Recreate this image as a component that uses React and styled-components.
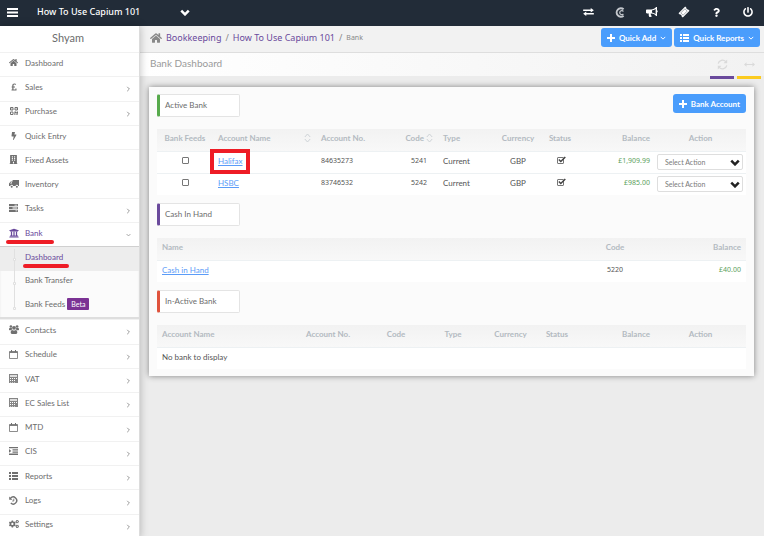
import React from 'react';
import styled, { createGlobalStyle, css } from 'styled-components';
import {
  FaHome,
  FaPoundSign,
  FaBolt,
  FaBuilding,
  FaUniversity,
  FaCogs,
  FaQuestion,
  FaPowerOff,
} from 'react-icons/fa';

const palette = {
  navy: '#222c38',
  purple: '#6a4a9c',
  blue: '#4a9dfc',
  link: '#5b9cf8',
  green: '#5c9f5c',
  red: '#ee1c25',
  text: '#6c6c6c',
  muted: '#b3bac1',
};

const wideFont = "'Noto Sans', 'Open Sans', sans-serif";

const GlobalStyle = createGlobalStyle`
  * {
    box-sizing: border-box;
  }
  body {
    margin: 0;
    background: #ececec;
    color: ${palette.text};
    font-family: Lato, 'Open Sans', sans-serif;
    font-size: 8px;
    line-height: 10px;
    overflow-x: hidden;
  }
  button, select, input {
    font-family: inherit;
    margin: 0;
  }
  a {
    color: inherit;
    text-decoration: none;
  }
  svg {
    display: block;
    flex: none;
  }
`;

const Page = styled.div`
  height: 100vh;
  display: flex;
  flex-direction: column;
  overflow: hidden;
`;

/* top bar */

const TopBar = styled.header`
  height: 26px;
  flex: none;
  display: flex;
  align-items: center;
  justify-content: space-between;
  padding: 0 10px 2px 7px;
  background: ${palette.navy};
  color: #fff;
`;

const TopGroup = styled.div`
  display: flex;
  align-items: center;
  gap: 19px;
`;

const IconButton = styled.button`
  display: flex;
  align-items: center;
  justify-content: center;
  padding: 0;
  border: 0;
  background: none;
  color: inherit;
  cursor: pointer;
`;

const CompanyButton = styled(IconButton)`
  width: 153px;
  justify-content: space-between;
  font-family: ${wideFont};
  font-size: 9px;
  font-weight: 500;
  line-height: 12px;
`;

const TopIcons = styled.nav`
  display: grid;
  grid-template-columns: repeat(6, 12px);
  gap: 20px;
`;

/* sidebar */

const Body = styled.div`
  flex: 1;
  min-height: 0;
  display: flex;
`;

const SideBar = styled.aside`
  width: 140px;
  flex: none;
  height: calc(100% + 2px);
  display: flex;
  flex-direction: column;
  background: #fff;
  border-right: 1px solid #dcdcdc;
  box-shadow: 0 0 8px rgba(0, 0, 0, 0.25);
  z-index: 1;
`;

const UserName = styled.div`
  height: 26px;
  flex: none;
  padding-top: 5px;
  text-align: center;
  font-size: 11px;
  line-height: 14px;
  padding-right: 3px;
`;

const Menu = styled.ul`
  flex: 1;
  display: grid;
  grid-auto-rows: 1fr;
  margin: 0;
  padding: 0;
  list-style: none;
`;

const MenuItem = styled.li`
  display: flex;
  border-top: 1px solid #f1f1f1;
  ${(props) =>
    props.$active &&
    css`
      color: ${palette.purple};
    `}
`;

const MenuLink = styled.a`
  flex: 1;
  display: flex;
  align-items: center;
  padding: 0 8px 4px 8px;
`;

const MenuIcon = styled.span`
  width: 11px;
  display: flex;
  justify-content: center;
  margin-right: 6px;
  color: ${(props) => (props.$active ? palette.purple : '#707070')};
`;

const MenuLabel = styled.span`
  flex: 1;
`;

const Arrow = styled.span`
  padding-top: 5px;
  color: #999;
`;

const SubMenuWrap = styled.li`
  grid-row: span 3;
  position: relative;
  display: flex;
  background: #fbfbfb;
  border-top: 1px solid #d0d0d0;
  border-bottom: 2px solid #dedede;
  box-shadow: inset 0 2px 2px #e4e4e4;
`;

const SubMenu = styled.ul`
  flex: 1;
  display: grid;
  grid-auto-rows: 1fr;
  margin: 0;
  padding: 0;
  list-style: none;
`;

const SubItem = styled.li`
  display: flex;
  align-items: center;
  padding-left: 25px;
  padding-bottom: 4px;
  gap: 2px;
  ${(props) =>
    props.$active &&
    css`
      background: #ededed;
      color: ${palette.purple};
    `}
`;

const Tree = styled.svg`
  position: absolute;
  left: 12px;
  top: 0;
`;

const Beta = styled.span`
  padding: 1px 4px;
  border-radius: 1px;
  background: #7b3294;
  color: #fff;
  font-size: 7px;
`;

const Marked = styled.span`
  position: relative;
`;

const Stroke = styled.span`
  position: absolute;
  left: ${(props) => props.$left}px;
  top: 12px;
  width: ${(props) => props.$width}px;
  height: 4px;
  border-radius: 2px;
  background: ${palette.red};
`;

/* main column */

const Main = styled.main`
  flex: 1;
  min-width: 0;
`;

const CrumbBar = styled.div`
  height: 27px;
  display: flex;
  align-items: center;
  justify-content: space-between;
  padding: 0 4px 3px 10px;
  background: #f2f2f2;
  border-bottom: 1px solid #dedede;
`;

const Crumbs = styled.nav`
  display: flex;
  align-items: center;
  gap: 4px;
  color: #888;
  font-family: ${wideFont};
  font-size: 9px;
  a {
    color: ${palette.purple};
  }
  small {
    font-size: 7px;
  }
`;

const Buttons = styled.div`
  display: flex;
  gap: 2px;
`;

const BlueButton = styled.button`
  height: 19px;
  display: flex;
  align-items: center;
  gap: 4px;
  padding: 0 6px;
  border: 0;
  border-radius: 3px;
  background: ${palette.blue};
  color: #fff;
  font-size: 8px;
  font-weight: 700;
  line-height: 10px;
  white-space: nowrap;
  cursor: pointer;
`;

const TitleBar = styled.div`
  height: 23px;
  display: flex;
  justify-content: space-between;
  padding-left: 10px;
  background: linear-gradient(to right, #fff, #f2f2f2);
`;

const Title = styled.h1`
  margin: 0;
  padding-top: 3px;
  color: #9a9a9a;
  font-size: 10px;
  font-weight: 400;
  line-height: 14px;
`;

const Tools = styled.div`
  display: flex;
  gap: 3px;
  padding-right: 3px;
`;

const Tool = styled(IconButton)`
  width: 24px;
  height: 26px;
  padding-bottom: 0;
  border-bottom: 3px solid ${(props) => props.$color};
  color: #dadada;
`;

const Panel = styled.div`
  margin: 11px 10px 0 9px;
  padding: 7px 8px;
  background: #fbfbfb;
  box-shadow: 0 0 6px rgba(0, 0, 0, 0.45);
`;

const SectionHead = styled.div`
  display: flex;
  align-items: flex-start;
  justify-content: space-between;
  height: 35px;
`;

const SectionLabel = styled.h2`
  width: 83px;
  height: 23px;
  margin: 0;
  padding: 5px 0 0 5px;
  border: 1px solid #e4e4e4;
  border-left: 3px solid ${(props) => props.$color};
  border-radius: 2px;
  background: #fff;
  font-size: 8px;
  font-weight: 400;
  line-height: 10px;
`;

const Table = styled.table`
  width: 100%;
  table-layout: fixed;
  border-collapse: collapse;
  margin-bottom: ${(props) => (props.$last ? 0 : 8)}px;
`;

const Th = styled.th`
  height: 22px;
  padding: 0 5px 3px;
  background: linear-gradient(#f2f2f2, #f8f8f8);
  color: ${palette.muted};
  font-weight: 700;
  text-align: ${(props) => props.$align || 'left'};
  white-space: nowrap;
`;

const Td = styled.td`
  height: 22px;
  padding: 0 5px 3px;
  border-top: 1px solid #edf1f3;
  background: #fff;
  color: ${(props) => (props.$money ? palette.green : '#555')};
  text-align: ${(props) => props.$align || 'left'};
  white-space: nowrap;
`;

const NumberTd = styled(Td)`
  font-family: ${wideFont};
  font-size: 7px;
`;

const SortHead = styled.span`
  display: flex;
  align-items: center;
  justify-content: ${(props) => (props.$tight ? 'flex-end' : 'space-between')};
  gap: 2px;
`;

const AccountLink = styled.a`
  position: relative;
  color: ${palette.link};
  text-decoration: underline;
`;

const Highlight = styled.span`
  position: absolute;
  top: -7px;
  left: -8px;
  width: 40px;
  height: 25px;
  border: 4px solid ${palette.red};
`;

const CheckWrap = styled.label`
  position: relative;
  display: inline-block;
  width: 7px;
  height: 7px;
  svg {
    position: absolute;
    left: 0;
    top: -1px;
  }
`;

const CheckInput = styled.input`
  appearance: none;
  display: block;
  width: 7px;
  height: 7px;
  border: 1px solid #777;
  border-radius: 1px;
  background: #fff;
`;

const ActionTd = styled(Td)`
  padding: 0 3px 0 2px;
`;

const SelectWrap = styled.span`
  position: relative;
  display: block;
  svg {
    position: absolute;
    right: 3px;
    top: 5px;
    color: #222;
    pointer-events: none;
  }
`;

const ActionSelect = styled.select`
  appearance: none;
  display: block;
  width: 100%;
  height: 16px;
  padding: 0 7px;
  border: 1px solid #dedede;
  border-radius: 2px;
  background: #fff;
  color: #7a7a7a;
  font-size: 7px;
`;

const Chevron = ({ width = 8, height = 5, stroke = 2 }) => (
  <svg width={width} height={height} viewBox="0 0 8 5">
    <path d="M1 1l3 3 3-3" fill="none" stroke="currentColor" strokeWidth={stroke} />
  </svg>
);

const SideArrow = ({ open }) =>
  open ? (
    <Chevron width={5} height={4} stroke={1.4} />
  ) : (
    <svg width="5" height="6" viewBox="0 0 5 6">
      <path d="M1.200.8l2.200 2.200-2.200 2.200" fill="none" stroke="currentColor" />
    </svg>
  );

const SortIcon = () => (
  <svg width="7" height="10" viewBox="0 0 7 10">
    <path d="M.8 4l2.700-3 2.700 3M.8 6l2.700 3 2.700-3" fill="none" stroke="#cdd2d6" />
  </svg>
);

const MenuBars = () => (
  <svg width="11" height="9" viewBox="0 0 11 9" fill="currentColor">
    <path d="M0 0h11v2H0zM0 3.500h11v2H0zM0 7h11v2H0z" />
  </svg>
);

const Exchange = () => (
  <svg width="11" height="8" viewBox="0 0 12 9" fill="currentColor">
    <path d="M0 1.600h8.500V0L12 2.500 8.500 5V3.400H0zM12 5.600H3.500V4L0 6.500 3.500 9V7.400H12z" />
  </svg>
);

const CapiumMark = () => (
  <svg width="10" height="11" viewBox="0 0 10 11" fill="none" stroke="#c3c7cc">
    <path d="M8.600 2.300A4.200 4.200 0 1 0 8.600 8.700" strokeWidth="2" />
    <path d="M8.400 4.500A2 2 0 1 0 8.400 6.800" strokeWidth="1.200" />
  </svg>
);

const Megaphone = () => (
  <svg width="12" height="11" viewBox="0 0 12 11" fill="currentColor">
    <path d="M1 2.500h5v4H4.700c-.1 1 .3 1.900 1.200 2.800-.7.900-2.100.900-2.700.5-.5-1.100-.7-2.200-.4-3.300H1c-.6 0-1-.4-1-.9V3.500c0-.6.4-1 1-1z" />
    <path d="M5.800 3C7.500 2.800 9 2.100 10.300.9v7.200C9 7 7.500 6.200 5.800 6" fill="none" stroke="currentColor" strokeWidth="1.100" />
    <path d="M9.800 0h1.200v3.300c1 .3 1 1.900 0 2.200V9H9.800z" />
  </svg>
);

const Ticket = () => (
  <svg width="12" height="12" viewBox="0 0 12 12">
    <path
      d="M7.200.5l1.200 1.200c-.3.800.900 2 1.700 1.700l1.400 1.400-6.700 6.700-1.300-1.300c.4-.900-.8-2.100-1.700-1.700L.5 7.200z"
      fill="currentColor"
    />
    <path d="M6.900 2.800l2.300 2.300-4.100 4.100-2.300-2.300z" fill="none" stroke="#222c38" strokeWidth=".4" />
  </svg>
);

const Plus = () => (
  <svg width="8" height="8" viewBox="0 0 8 8" fill="currentColor">
    <path d="M3 0h2v3h3v2H5v3H3V5H0V3h3z" />
  </svg>
);

const ListIcon = () => (
  <svg width="9" height="8" viewBox="0 0 9 8" fill="currentColor">
    <path d="M0 0h2v2H0zM3 0h6v2H3zM0 3h2v2H0zM3 3h6v2H3zM0 6h2v2H0zM3 6h6v2H3z" />
  </svg>
);

const QrIcon = () => (
  <svg width="8" height="8" viewBox="0 0 8 8">
    <path d="M.5.5h2.500V3H.5zM5 .5h2.500V3H5zM.5 5h2.500v2.500H.5z" fill="none" stroke="currentColor" />
    <path d="M1.400 1.400h.8v.8h-.8zM5.900 1.400h.8v.8h-.8zM4.400 4.500h1.600v.8h.8v-.8H8v2.300H6.300v-.8H5.400V8h-1zM6 7.200h.8V8H6zM7.200 7.200H8V8h-.8z" fill="currentColor" />
  </svg>
);

const UsersIcon = () => (
  <svg width="10" height="9" viewBox="0 0 10 9" fill="currentColor">
    <circle cx="1.900" cy="1.500" r="1.300" />
    <circle cx="8.100" cy="1.500" r="1.300" />
    <circle cx="5" cy="2.800" r="1.900" />
    <path d="M0 4.700C0 3.400.4 2.700 1 2.700c.6.4 1.200.4 1.800.2.100.7.300 1.200.7 1.600-.8 0-1.300.2-1.700.7H.6c-.4 0-.6-.2-.6-.5zM10 4.700c0-1.300-.4-2-1-2-.6.4-1.200.4-1.800.2-.1.700-.3 1.200-.7 1.600.8 0 1.300.2 1.700.7h1.200c.4 0 .6-.2.6-.5zM1.700 7.600c0-1.700.6-2.700 1.500-2.700 1.200.8 2.400.8 3.600 0 .9 0 1.500 1 1.500 2.700 0 .9-.5 1.300-1.200 1.300H2.900c-.7 0-1.200-.4-1.200-1.300z" />
  </svg>
);

const CalculatorIcon = () => (
  <svg width="9" height="9" viewBox="0 0 9 9">
    <path d="M0 0h9v9H0z" fill="#858585" />
    <path d="M1 1h7v2H1z" fill="#ddd" />
    <path d="M1 4h1v1H1zM3 4h1v1H3zM5 4h1v1H5zM1 6h1v1H1zM3 6h1v1H3zM5 6h1v1H5zM1 8h1v.5H1zM3 8h1v.5H3zM5 8h1v.5H5zM7 4h1v1H7z" fill="#fff" />
  </svg>
);

const IndentIcon = () => (
  <svg width="9" height="8" viewBox="0 0 9 8" fill="currentColor">
    <path d="M0 0h9v1.300H0zM3.500 2.200H9v1.300H3.500zM3.500 4.400H9v1.300H3.500zM0 6.600h9v1.300H0zM0 2.100l2.300 1.800L0 5.800z" />
  </svg>
);

const TasksIcon = () => (
  <svg width="9" height="8" viewBox="0 0 9 8" fill="currentColor">
    <path d="M0 0h9v2.200H0zM0 2.900h9v2.200H0zM0 5.800h9V8H0z" />
    <path d="M5.500.7h2.800v.8H5.500zM3.500 3.600h4.800v.8H3.500zM6.500 6.500h1.800v.8H6.500z" fill="#fff" />
  </svg>
);

const TruckIcon = () => (
  <svg width="10" height="8" viewBox="0 0 10 8" fill="currentColor">
    <path d="M3.600 0H10v6H9.200a1.300 1.300 0 0 0-2.600 0H4a1.300 1.300 0 0 0-2.600 0H0V3.400L1.700 1.500h1.900zM1 3.500h1.900V2.300h-.8z" />
    <circle cx="2.700" cy="6.700" r="1" />
    <circle cx="7.900" cy="6.700" r="1" />
  </svg>
);

const CalendarIcon = () => (
  <svg width="9" height="9" viewBox="0 0 9 9" fill="none" stroke="currentColor">
    <path d="M.5 1.500h8v7h-8z" strokeWidth=".8" />
    <path d="M.5 2.300h8" strokeWidth="1.200" />
    <path d="M2.500 0v2M6.500 0v2" />
  </svg>
);

const HistoryIcon = () => (
  <svg width="9" height="9" viewBox="0 0 9 9" fill="none" stroke="currentColor">
    <path d="M1.600 2.100a3.500 3.500 0 1 1 .2 5" strokeWidth="1.400" />
    <path d="M.2.400v3.300h3.300z" fill="currentColor" stroke="none" />
    <path d="M4.800 2.700v2.300H3.200" strokeWidth=".9" />
  </svg>
);

const RefreshIcon = () => (
  <svg width="11" height="11" viewBox="0 0 11 11" fill="none" stroke="currentColor" strokeWidth="1.300">
    <path d="M1.200 4.600a4.400 4.400 0 0 1 7.600-2M9.800 6.400a4.400 4.400 0 0 1-7.600 2" />
    <path d="M10.200.6v3.700H6.500zM.8 10.400V6.700h3.700z" fill="currentColor" stroke="none" />
  </svg>
);

const WidthIcon = () => (
  <svg width="11" height="5" viewBox="0 0 11 5" fill="currentColor">
    <path d="M0 2.500L2.500.2V2h6V.2L11 2.500 8.500 4.800V3h-6v1.800z" />
  </svg>
);

const menuTop = [
  { label: 'Dashboard', icon: <FaHome size={9} /> },
  { label: 'Sales', icon: <FaPoundSign size={8} />, arrow: true },
  { label: 'Purchase', icon: <QrIcon />, arrow: true },
  { label: 'Quick Entry', icon: <FaBolt size={8} /> },
  { label: 'Fixed Assets', icon: <FaBuilding size={9} /> },
  { label: 'Inventory', icon: <TruckIcon /> },
  { label: 'Tasks', icon: <TasksIcon />, arrow: true },
  { label: 'Bank', icon: <FaUniversity size={10} />, arrow: true, active: true },
];

const menuBottom = [
  { label: 'Contacts', icon: <UsersIcon />, arrow: true },
  { label: 'Schedule', icon: <CalendarIcon />, arrow: true },
  { label: 'VAT', icon: <CalculatorIcon />, arrow: true },
  { label: 'EC Sales List', icon: <CalculatorIcon />, arrow: true },
  { label: 'MTD', icon: <CalendarIcon />, arrow: true },
  { label: 'CIS', icon: <IndentIcon />, arrow: true },
  { label: 'Reports', icon: <ListIcon />, arrow: true },
  { label: 'Logs', icon: <HistoryIcon />, arrow: true },
  { label: 'Settings', icon: <FaCogs size={10} />, arrow: true },
];

const accounts = [
  { name: 'Halifax', no: '84635273', code: '5241', balance: '£1,909.99', marked: true },
  { name: 'HSBC', no: '83746532', code: '5242', balance: '£985.00' },
];

const MenuEntry = ({ item }) => (
  <MenuItem $active={item.active}>
    <MenuLink href="#">
      <MenuIcon $active={item.active}>{item.icon}</MenuIcon>
      <MenuLabel>
        <Marked>
          {item.label}
          {item.active && <Stroke $left={-19} $width={48} />}
        </Marked>
      </MenuLabel>
      {item.arrow && (
        <Arrow>
          <SideArrow open={item.active} />
        </Arrow>
      )}
    </MenuLink>
  </MenuItem>
);

const Columns = ({ widths }) => (
  <colgroup>
    {widths.map((width, i) => (
      <col key={i} width={width} />
    ))}
  </colgroup>
);

const Check = ({ label, checked }) => (
  <CheckWrap>
    <CheckInput type="checkbox" aria-label={label} defaultChecked={checked} />
    {checked && (
      <svg width="9" height="8" viewBox="0 0 9 8">
        <path d="M1.800 3.500l2 2L8.300 1" fill="none" stroke="#444" strokeWidth="1.500" />
      </svg>
    )}
  </CheckWrap>
);

const ActiveTable = () => (
  <Table>
    <Columns widths={[56, 103, 84, 38, 58, 44, 40, 75, 91]} />
    <thead>
      <tr>
        <Th $align="center">Bank Feeds</Th>
        <Th>
          <SortHead>
            Account Name <SortIcon />
          </SortHead>
        </Th>
        <Th>Account No.</Th>
        <Th>
          <SortHead $tight>
            Code <SortIcon />
          </SortHead>
        </Th>
        <Th>Type</Th>
        <Th $align="center">Currency</Th>
        <Th $align="center">Status</Th>
        <Th $align="right">Balance</Th>
        <Th $align="center">Action</Th>
      </tr>
    </thead>
    <tbody>
      {accounts.map((account) => (
        <tr key={account.no}>
          <Td $align="center">
            <Check label={`${account.name} bank feed`} />
          </Td>
          <Td>
            <AccountLink href="#">
              {account.name}
              {account.marked && <Highlight />}
            </AccountLink>
          </Td>
          <NumberTd>{account.no}</NumberTd>
          <NumberTd $align="center">{account.code}</NumberTd>
          <Td>Current</Td>
          <Td $align="center">GBP</Td>
          <Td $align="center">
            <Check label={`${account.name} status`} checked />
          </Td>
          <NumberTd $align="right" $money>
            {account.balance}
          </NumberTd>
          <ActionTd>
            <SelectWrap>
              <ActionSelect aria-label={`${account.name} action`}>
                <option>Select Action</option>
              </ActionSelect>
              <Chevron width={10} height={7} />
            </SelectWrap>
          </ActionTd>
        </tr>
      ))}
    </tbody>
  </Table>
);

const CashTable = () => (
  <Table>
    <Columns widths={[423, 70, 96]} />
    <thead>
      <tr>
        <Th>Name</Th>
        <Th $align="center">Code</Th>
        <Th $align="right">Balance</Th>
      </tr>
    </thead>
    <tbody>
      <tr>
        <Td>
          <AccountLink href="#">Cash in Hand</AccountLink>
        </Td>
        <NumberTd $align="center">5220</NumberTd>
        <NumberTd $align="right" $money>
          £40.00
        </NumberTd>
      </tr>
    </tbody>
  </Table>
);

const InactiveTable = () => (
  <Table $last>
    <Columns widths={[144, 67, 56, 58, 57, 36, 80, 91]} />
    <thead>
      <tr>
        <Th>Account Name</Th>
        <Th>Account No.</Th>
        <Th $align="center">Code</Th>
        <Th $align="center">Type</Th>
        <Th $align="center">Currency</Th>
        <Th $align="center">Status</Th>
        <Th $align="right">Balance</Th>
        <Th $align="center">Action</Th>
      </tr>
    </thead>
    <tbody>
      <tr>
        <Td colSpan={8}>No bank to display</Td>
      </tr>
    </tbody>
  </Table>
);

const App = () => {
  return (
    <>
      <GlobalStyle />
      <Page>
        <TopBar>
          <TopGroup>
            <IconButton aria-label="Menu">
              <MenuBars />
            </IconButton>
            <CompanyButton>
              How To Use Capium 101
              <Chevron width={10} height={7} />
            </CompanyButton>
          </TopGroup>
          <TopIcons>
            <IconButton aria-label="Switch">
              <Exchange />
            </IconButton>
            <IconButton aria-label="Capium">
              <CapiumMark />
            </IconButton>
            <IconButton aria-label="News">
              <Megaphone />
            </IconButton>
            <IconButton aria-label="Tickets">
              <Ticket />
            </IconButton>
            <IconButton aria-label="Help">
              <FaQuestion size={9} />
            </IconButton>
            <IconButton aria-label="Log out">
              <FaPowerOff size={10} />
            </IconButton>
          </TopIcons>
        </TopBar>
        <Body>
          <SideBar>
            <UserName>Shyam</UserName>
            <Menu>
              {menuTop.map((item) => (
                <MenuEntry key={item.label} item={item} />
              ))}
              <SubMenuWrap>
                <SubMenu>
                  <SubItem $active>
                    <Marked>
                      <a href="#">Dashboard</a>
                      <Stroke $left={-2} $width={46} />
                    </Marked>
                  </SubItem>
                  <SubItem>
                    <a href="#">Bank Transfer</a>
                  </SubItem>
                  <SubItem>
                    <a href="#">Bank Feeds</a>
                    <Beta>Beta</Beta>
                  </SubItem>
                </SubMenu>
                <Tree width="5" height="64" viewBox="0 0 5 64" fill="#fbfbfb" stroke="#e0e0e0">
                  <path d="M2.500 2v58" />
                  <path d="M1.500 11.500h2v2h-2zM1.500 35.500h2v2h-2zM1.500 60.500h2v2h-2z" />
                </Tree>
              </SubMenuWrap>
              {menuBottom.map((item) => (
                <MenuEntry key={item.label} item={item} />
              ))}
            </Menu>
          </SideBar>
          <Main>
            <CrumbBar>
              <Crumbs>
                <FaHome size={12} />
                <a href="#">Bookkeeping</a>
                <span>/</span>
                <a href="#">How To Use Capium 101</a>
                <span>/</span>
                <small>Bank</small>
              </Crumbs>
              <Buttons>
                <BlueButton>
                  <Plus />
                  Quick Add
                  <Chevron width={6} height={4} stroke={1.3} />
                </BlueButton>
                <BlueButton>
                  <ListIcon />
                  Quick Reports
                  <Chevron width={6} height={4} stroke={1.3} />
                </BlueButton>
              </Buttons>
            </CrumbBar>
            <TitleBar>
              <Title>Bank Dashboard</Title>
              <Tools>
                <Tool $color={palette.purple} aria-label="Refresh">
                  <RefreshIcon />
                </Tool>
                <Tool $color="#fbcb20" aria-label="Full width">
                  <WidthIcon />
                </Tool>
              </Tools>
            </TitleBar>
            <Panel>
              <SectionHead>
                <SectionLabel $color="#57aa4c">Active Bank</SectionLabel>
                <BlueButton>
                  <Plus />
                  Bank Account
                </BlueButton>
              </SectionHead>
              <ActiveTable />
              <SectionHead>
                <SectionLabel $color={palette.purple}>Cash In Hand</SectionLabel>
              </SectionHead>
              <CashTable />
              <SectionHead>
                <SectionLabel $color="#e0533d">In-Active Bank</SectionLabel>
              </SectionHead>
              <InactiveTable />
            </Panel>
          </Main>
        </Body>
      </Page>
    </>
  );
};

export default App;
